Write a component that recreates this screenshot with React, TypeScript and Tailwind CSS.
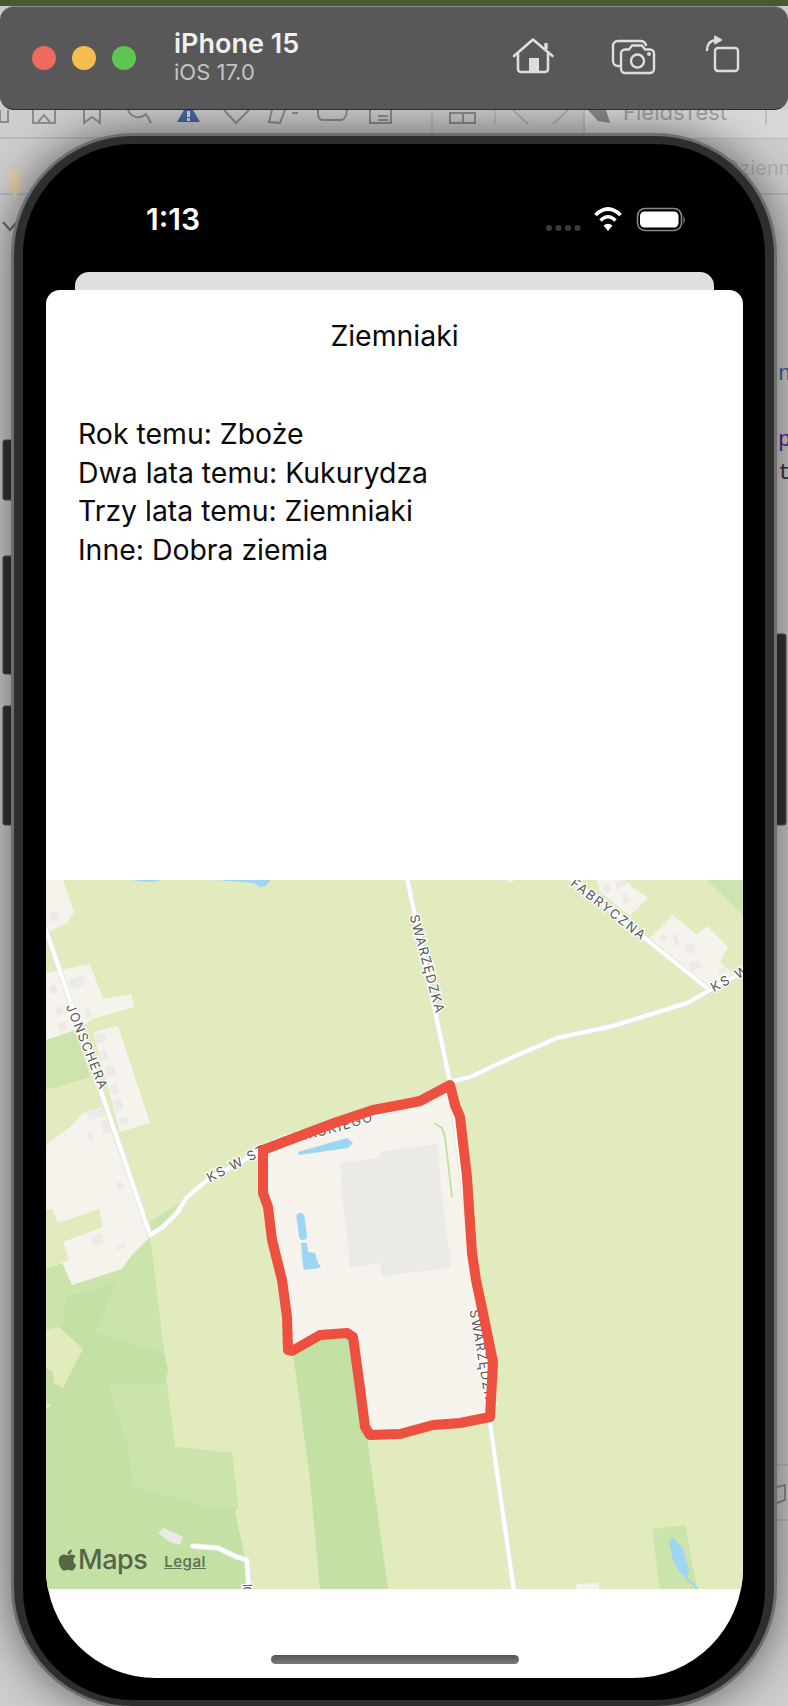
import { FaApple } from "react-icons/fa";

const buildings: [number, number, number, number][] = [
  [50, 912, 8, 9], [70, 977, 14, 10], [50, 985, 7, 9], [56, 1007, 7, 8], [85, 1009, 6, 8], [58, 1022, 9, 8],
  [94, 1034, 12, 9], [100, 1050, 7, 10], [106, 1066, 9, 10], [111, 1084, 7, 10], [114, 1100, 8, 10], [120, 1117, 8, 8],
  [88, 1110, 16, 8], [102, 1120, 8, 13], [88, 1132, 5, 9], [117, 1182, 6, 7], [92, 1235, 11, 10], [116, 1245, 9, 4],
  [603, 884, 7, 9], [616, 881, 10, 6], [623, 893, 5, 10], [660, 935, 7, 6], [674, 934, 4, 12], [685, 944, 10, 9], [690, 962, 10, 8], [718, 968, 8, 5],
];

const Road = ({ d, w = 4 }: { d: string; w?: number }) => (
  <>
    <path d={d} fill="none" stroke="#e6e6e2" strokeWidth={w + 2} strokeLinejoin="round" strokeLinecap="round" />
    <path d={d} fill="none" stroke="#ffffff" strokeWidth={w} strokeLinejoin="round" strokeLinecap="round" />
  </>
);

const Label = ({ x, y, r, len, children }: { x: number; y: number; r: number; len: number; children: string }) => (
  <text
    transform={`translate(${x} ${y}) rotate(${r})`}
    textLength={len}
    lengthAdjust="spacing"
    fontSize="13"
    fill="#55575a"
    stroke="#ffffff"
    strokeWidth="2.5"
    paintOrder="stroke"
    fontFamily="Inter, sans-serif"
    dominantBaseline="middle"
  >
    {children}
  </text>
);

function MapDrawing() {
  const red =
    "M263 1150 L297 1137 L337 1122 L373 1110 L400 1105 L420 1101 L450 1085 L455 1105 L460 1117 L467 1177 L472 1253 L476 1280 L483 1313 L493 1362 L490 1417 L460 1423 L433 1425 L400 1434 L370 1435 L365 1427 L360 1388 L353 1337 L347 1333 L320 1335 L292 1351 L288 1350 L287 1317 L282 1280 L272 1240 L268 1207 L263 1193 Z";
  return (
    <svg viewBox="46 880 697 709" className="block h-[709px] w-[697px]">
      <rect x="46" y="880" width="697" height="709" fill="#e1ebbd" />
      {/* water slivers at the top */}
      <path d="M130 880 H163 L150 882 Z M217 880 H270 L266 886 L260 887 L254 883 Z" fill="#9cd6f2" />
      {/* woods */}
      <path d="M150 1237 L164 1352 L168 1370 L166 1380 L175 1447 L232 1453 L238 1507 L235 1512 L245 1557 L250 1589 H46 V1268 L122 1255 Z" fill="#c4e1a5" />
      <path d="M95 1333 L104 1313 L116 1283 L122 1269 L147 1237 L150 1237 L164 1352 Z" fill="#cbe4ab" />
      <path d="M46 1268 L62 1263 L72 1285 L122 1269 L116 1283 L104 1285 L96 1292 L66 1295 L63 1327 L46 1330 Z" fill="#cbe4ab" />
      <path d="M110 1383 L167 1383 L175 1447 L232 1453 L238 1507 L210 1507 L133 1487 L128 1447 L112 1400 Z" fill="#cbe4ab" />
      <path d="M46 1330 L59 1327 L83 1349 L63 1388 L54 1383 L53 1372 L46 1367 Z M46 1402 L51 1405 L46 1410 Z" fill="#e1ebbd" />
      <path d="M293 1353 L320 1335 L348 1333 L353 1337 L360 1388 L367 1437 L388 1589 H320 L310 1480 Z" fill="#c4e1a5" />
      <path d="M149 1223 L181 1202 L169 1220 L151 1237 Z" fill="#cbe4ab" />
      <path d="M46 1040 L75 1030 L90 1077 L70 1083 L46 1090 Z" fill="#cde4ae" />
      <path d="M707 880 H743 V915 Z" fill="#cde4ae" />
      <path d="M652 1529 L685 1525 L697 1589 H660 Z" fill="#cbe4ab" />
      {/* built-up areas */}
      <g fill="#f5f3ec">
        <path d="M46 880 H63 L74 912 L67 923 L46 933 Z" />
        <path d="M46 973 L90 964 L103 999 L131 994 L134 1007 L93 1019 L75 1030 L46 1040 Z" />
        <path d="M93 1032 L118 1026 L150 1123 L120 1132 Z" />
        <path d="M46 1145 L70 1127 L83 1113 L102 1107 L150 1237 L132 1255 L122 1269 L72 1285 L62 1263 L46 1268 Z" />
        <path d="M507 880 H515 L510 883 Z" />
        <path d="M597 880 H623 L648 898 L630 916 L600 892 Z" />
        <path d="M650 938 L673 915 L697 935 L707 926 L728 947 L720 962 L735 975 L712 990 Z" />
        <path d="M576 1584 L599 1583 V1589 H577 Z" />
        <path d={red} />
      </g>
      <path d="M46 1210 L52 1209 L58 1223 L99 1209 L103 1227 L63 1242 L69 1260 L46 1268 Z" fill="#e1ebbd" />
      <g fill="#ebeae7">
        {buildings.map(([x, y, w, h]) => (
          <rect key={`${x}-${y}`} x={x} y={y} width={w} height={h} transform={`rotate(-17 ${x + w / 2} ${y + h / 2})`} />
        ))}
        <path d="M158 1533 L164 1528 L183 1537 L180 1545 L170 1542 Z" />
        <path d="M340 1163 L362 1160 L380 1158 L380 1152 L438 1144 L440 1175 L445 1222 L450 1255 L450 1268 L382 1276 L380 1263 L350 1268 L347 1230 L343 1207 Z" />
      </g>
      {/* ponds */}
      <g fill="#9cd6f2">
        <path d="M298 1152 L347 1138 L353 1143 L348 1148 L299 1155 Z" />
        <path d="M301 1243 L307 1243 L308 1252 L315 1253 L318 1263 L321 1266 L319 1268 L305 1270 L303 1267 Z" />
        <path d="M673 1537 L678 1543 L683 1548 L685 1557 L689 1570 L687 1578 L680 1573 L673 1560 L669 1543 Z" />
      </g>
      <path d="M300.5 1217 L303 1236" stroke="#9cd6f2" strokeWidth="8" strokeLinecap="round" />
      <path d="M685 1577 L698 1589" stroke="#9cd6f2" strokeWidth="2" />
      <path d="M434 1123 L442 1128 L445 1137 L452 1197" fill="none" stroke="#c4e1a5" strokeWidth="2" />
      {/* roads */}
      <Road d="M46 930 L150 1235" />
      <Road d="M570 878 L707 988" />
      <Road d="M150 1235 L163 1227 L177 1213 L187 1197 L210 1178 L263 1150 L400 1108 L450 1082 L470 1077 L513 1057 L557 1038 L613 1026 L687 1003 L710 990 L745 971" />
      <Road d="M407 878 L450 1082 L478 1300 L490 1423 L514 1591" />
      <Road d="M193 1546 L218 1548 L237 1557 L247 1560 L249 1591" />
      {/* street names */}
      <Label x={69} y={1005} r={68} len={90}>JONSCHERA</Label>
      <Label x={413} y={915} r={75} len={101}>SWARZĘDZKA</Label>
      <Label x={572} y={882} r={38} len={90}>FABRYCZNA</Label>
      <Label x={712} y={989} r={-28} len={40}>KS W</Label>
      <path id="ks-label" d="M208 1179 L263 1150 L300 1137 L340 1127 L376 1116" fill="none" />
      <text fontSize="13" fill="#55575a" stroke="#ffffff" strokeWidth="2.5" paintOrder="stroke" fontFamily="Inter, sans-serif" dominantBaseline="middle">
        <textPath href="#ks-label" textLength={176} lengthAdjust="spacing">KS W STANIMIRSKIEGO</textPath>
      </text>
      <Label x={473} y={1310} r={80} len={101}>SWARZĘDZKA</Label>
      <Label x={246} y={1584} r={88} len={12}>IC</Label>
      {/* marked field */}
      <path d={red} fill="none" stroke="#ee503f" strokeWidth="10" strokeLinejoin="round" />
    </svg>
  );
}

function Backdrop() {
  return (
    <svg viewBox="0 0 788 1706" className="absolute inset-0 h-[1706px] w-[788px]">
      <path d="M0 138 H788 M0 194 H788 M776 1465 H788 M776 1520 H788" stroke="#b5b5b5" strokeWidth="1.5" />
      <rect x="584" y="110" width="204" height="28" fill="#d8d8d8" />
      <g fill="none" stroke="#8c8c8c" strokeWidth="2">
        <path d="M0 110 V122 H8 V110" />
        <path d="M33 110 V123 H55 V110 M38 122 L44 115 L50 122" />
        <path d="M84 110 V123 L92 117 L100 123 V110" />
        <path d="M128 110 A11 11 0 0 0 146 114 L151 123" />
        <path d="M224 110 L236 123 L249 110" />
        <path d="M272 110 L269 122 L280 123 L285 110 M292 113 H298" />
        <path d="M318 110 V115 Q319 120 323 120 H341 Q346 120 347 110" />
        <path d="M370 110 V123 H391 V110 M378 116 H388 M378 120 H388" />
        <path d="M432 110 V133 M495 110 V125 M584 110 V133 M766 110 V125" stroke="#bdbdbd" />
        <path d="M450 113 H463 V123 H450 Z M463 113 H475 V123 H463 Z" />
        <path d="M513 110 L528 124 M568 110 L553 124" stroke="#b0b0b0" />
      </g>
      <path d="M177 122 L184 110 H193 L200 122 Z" fill="#4a68a5" />
      <rect x="187" y="111" width="3" height="6" fill="#d8d8d8" />
      <rect x="187" y="118" width="3" height="3" fill="#d8d8d8" />
      <path d="M588 110 H606 L610 123 L598 121 Z" fill="#8a8a8a" />
      <text x="623" y="120" fontSize="22" fill="#a0a0a0" fontFamily="Inter, sans-serif">FieldsTest</text>
      <text x="725" y="175" fontSize="20" fill="#b0b0b0" fontFamily="Inter, sans-serif">Dzienn</text>
      <path d="M15 168 V195 M9 170 L15 186 L21 170 M8 180 L15 195 L22 180" fill="none" stroke="#e5cfa8" strokeWidth="3" />
      <path d="M3 222 L10 230 L17 222" fill="none" stroke="#666666" strokeWidth="2" />
      <text x="778" y="380" fontSize="22" fill="#3d5fa0" fontFamily="Liberation Mono, monospace">n</text>
      <text x="778" y="446" fontSize="22" fill="#4b2a90" fontFamily="Liberation Mono, monospace">p</text>
      <text x="778" y="479" fontSize="22" fill="#333333" fontFamily="Liberation Mono, monospace">t</text>
      <path d="M777 1487 L785 1485 V1500 L777 1503" fill="none" stroke="#8c8c8c" strokeWidth="2" />
      <g fill="#333333" stroke="#555555">
        <rect x="3" y="440" width="10" height="60" rx="2" />
        <rect x="3" y="556" width="10" height="118" rx="2" />
        <rect x="3" y="706" width="10" height="119" rx="2" />
        <rect x="776" y="634" width="10" height="191" rx="2" />
      </g>
    </svg>
  );
}

function HomeIcon() {
  return (
    <svg viewBox="511 34 44 48" className="h-[48px] w-[44px]" fill="none" stroke="#dedede" strokeWidth="2.6" strokeLinecap="round" strokeLinejoin="round">
      <path d="M514 56 L533 39.5 L552.5 56" />
      <path d="M546 43 V49" strokeWidth="3.4" strokeLinecap="butt" />
      <path d="M518 53 V69 A3 3 0 0 0 521 72 H545 A3 3 0 0 0 548 69 V53" />
      <rect x="529" y="58" width="10" height="14" fill="#dedede" stroke="none" />
    </svg>
  );
}

function CameraIcon() {
  return (
    <svg viewBox="611 34 46 48" className="h-[48px] w-[46px]" fill="none" stroke="#dedede" strokeWidth="2.4" strokeLinecap="round" strokeLinejoin="round">
      <path d="M619 66 H618 A5 5 0 0 1 613 61 V46 A5 5 0 0 1 618 41 H640 A6 6 0 0 1 646 45" />
      <path d="M625 49.5 H629 L632 45.5 H642 L645 49.5 H650 A4 4 0 0 1 654 53.5 V69 A4 4 0 0 1 650 73 H625 A4 4 0 0 1 621 69 V53.5 A4 4 0 0 1 625 49.5 Z" />
      <circle cx="637.5" cy="61" r="6.5" />
      <circle cx="649" cy="54" r="0.8" fill="#dedede" />
    </svg>
  );
}

function RotateIcon() {
  return (
    <svg viewBox="704 34 38 48" className="h-[48px] w-[38px]" fill="none" stroke="#dedede" strokeWidth="2.4" strokeLinecap="round" strokeLinejoin="round">
      <rect x="715" y="48" width="23" height="23" rx="3" />
      <path d="M707 50 Q707 41 716 40" />
      <path d="M715 36 L722 40 L715 44 Z" fill="#dedede" strokeWidth="1" />
    </svg>
  );
}

function StatusIcons() {
  return (
    <svg viewBox="540 200 150 36" className="h-[36px] w-[150px]" fill="none">
      <g fill="#3a3a3a">
        <circle cx="549" cy="227" r="3" />
        <circle cx="558.5" cy="227" r="3" />
        <circle cx="568" cy="227" r="3" />
        <circle cx="577.5" cy="227" r="3" />
      </g>
      <g stroke="#ffffff" strokeLinecap="butt">
        <path d="M595.5 214 Q608 202 620.5 214" strokeWidth="3.6" />
        <path d="M600.5 219.5 Q608 212 615.5 219.5" strokeWidth="3.4" />
      </g>
      <path d="M603.5 224.5 Q608 221 612.5 224.5 L608 230 Z" fill="#ffffff" />
      <rect x="637.5" y="207.5" width="44" height="22" rx="7.5" stroke="#8a8a8a" strokeWidth="1.6" />
      <rect x="640" y="210.5" width="38.5" height="16" rx="4.5" fill="#ffffff" />
      <path d="M683.5 214.5 Q686 219 683.5 223.5 Z" fill="#8a8a8a" />
    </svg>
  );
}

export default function App() {
  return (
    <div className="relative h-[1706px] w-[788px] overflow-hidden bg-[#cdcdcd] font-['Inter',sans-serif]">
      <Backdrop />
      <div className="relative h-[6px] bg-[#4a5a2e]" />
      <header className="relative z-10 flex h-[104px] items-center rounded-[14px] border-t border-b border-t-[#8a8a8a] border-b-[#2c2c2c] bg-[#585858] pl-[32px] pr-[46px]">
        <div className="flex gap-4">
          <span className="h-6 w-6 rounded-full bg-[#ee6a5f]" />
          <span className="h-6 w-6 rounded-full bg-[#f5bd4f]" />
          <span className="h-6 w-6 rounded-full bg-[#5fc454]" />
        </div>
        <div className="ml-[38px] flex flex-col pb-[2px]">
          <span className="text-[27px] font-semibold leading-[30px] text-[#efefef]">iPhone 15</span>
          <span className="text-[22px] leading-[27px] text-[#c4c4c4]">iOS 17.0</span>
        </div>
        <div className="ml-auto flex items-center">
          <HomeIcon />
          <div className="w-[56px]" />
          <CameraIcon />
          <div className="w-[47px]" />
          <RotateIcon />
        </div>
      </header>
      <div className="relative ml-[11px] mt-[23px] h-[1576px] w-[766px] rounded-[122px] border-[3px] border-[#6e6e6e] bg-[#2e2e2e] px-[9px] pb-[6px] pt-[8px] shadow-[0_0_45px_rgba(0,0,0,0.55)]">
        <div className="flex h-full flex-col rounded-[110px] bg-black pb-[22px] pl-[23px] pr-[22px]">
          <div className="flex h-[128px] shrink-0 items-center justify-between pl-[100px] pr-[53px] pt-[22px]">
            <span className="text-[30px] font-semibold leading-[34px] text-white">1:13</span>
            <StatusIcons />
          </div>
          <div className="mx-[29px] h-[30px] shrink-0 rounded-t-[14px] bg-[#dfdfdf]" />
          <main className="relative -mt-[12px] flex flex-1 flex-col overflow-hidden rounded-b-[110px] rounded-t-[14px] bg-white text-[#0a0a0a]">
            <div className="h-[590px] shrink-0 pt-[27px]">
              <h1 className="text-center text-[28.4px] font-normal leading-[38px]">Ziemniaki</h1>
              <p className="mt-[60px] pl-[32px] text-[28.4px] leading-[38.6px]">
                Rok temu: Zboże
                <br />
                Dwa lata temu: Kukurydza
                <br />
                Trzy lata temu: Ziemniaki
                <br />
                Inne: Dobra ziemia
              </p>
            </div>
            <div className="relative h-[709px] shrink-0">
              <MapDrawing />
              <div className="absolute bottom-[13px] left-[11px] flex items-center text-[#586647]">
                <FaApple className="h-[24px] w-[21px]" />
                <span className="text-[27px] font-medium leading-[32px] tracking-[-0.5px]">Maps</span>
                <span className="ml-[17px] mt-[4px] text-[15px] font-semibold leading-[18px] tracking-[0.5px] text-[#65755a] underline">Legal</span>
              </div>
            </div>
            <div className="flex flex-1 items-end justify-center pb-[14px]">
              <div className="h-[9px] w-[248px] rounded-full bg-gradient-to-b from-[#555555] to-[#7a7a7a]" />
            </div>
          </main>
        </div>
      </div>
    </div>
  );
}
